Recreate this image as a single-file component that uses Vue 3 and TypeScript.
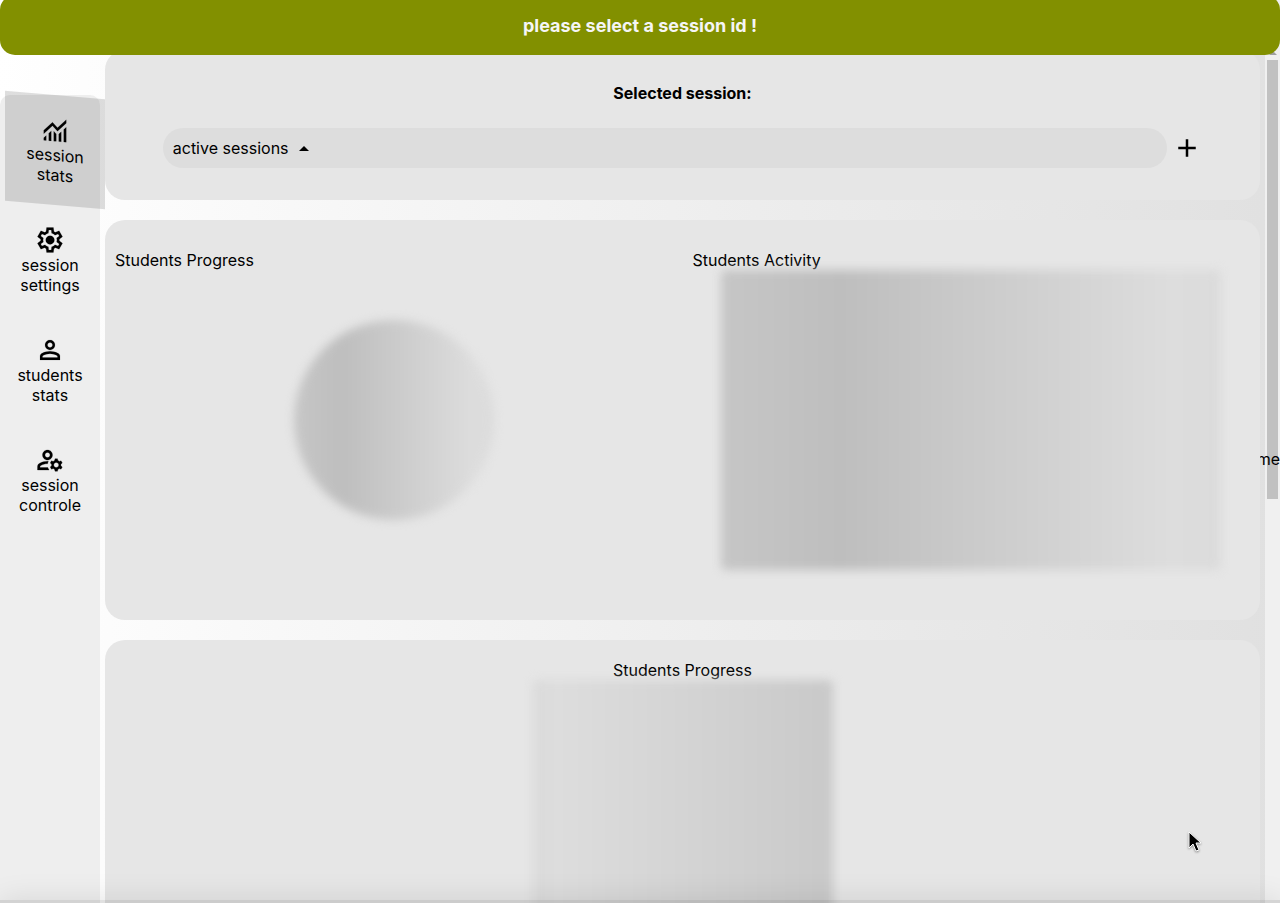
<script setup lang="ts">
import { ref } from 'vue'

interface NavItem {
  id: string
  lines: [string, string]
  viewBox: string
  stroke: number
  path: string
}

const symbolBox = '0 -960 960 960'

const navItems: NavItem[] = [
  {
    id: 'session-stats',
    lines: ['session', 'stats'],
    viewBox: symbolBox,
    stroke: 4,
    path: 'M120-120v-80l80-80v160h-80Zm160 0v-240l80-80v320h-80Zm160 0v-320l80 81v239h-80Zm160 0v-239l80-80v319h-80Zm160 0v-400l80-80v480h-80ZM120-327v-113l280-280 160 160 280-280v113L560-447 400-607 120-327Z',
  },
  {
    id: 'session-settings',
    lines: ['session', 'settings'],
    viewBox: symbolBox,
    stroke: 4,
    path: 'm370-80-16-128q-13-5-24.5-12T307-235l-119 50L78-375l103-78q-1-7-1-13.5v-27q0-6.5 1-13.5L78-585l110-190 119 50q11-8 23-15t24-12l16-128h220l16 128q13 5 24.5 12t22.5 15l119-50 110 190-103 78q1 7 1 13.5v27q0 6.5-2 13.5l103 78-110 190-118-50q-11 8-23 15t-24 12L590-80H370Zm70-80h79l14-106q31-8 57.5-23.5T639-327l99 41 39-68-86-65q5-14 7-29.5t2-31.5q0-16-2-31.5t-7-29.5l86-65-39-68-99 42q-22-23-48.5-38.5T533-694l-13-106h-79l-14 106q-31 8-57.5 23.5T321-633l-99-41-39 68 86 64q-5 15-7 30t-2 32q0 16 2 31t7 30l-86 65 39 68 99-42q22 23 48.5 38.5T427-266l13 106Zm42-180q58 0 99-41t41-99q0-58-41-99t-99-41q-59 0-99.5 41T342-480q0 58 40.5 99t99.5 41Z',
  },
  {
    id: 'students-stats',
    lines: ['students', 'stats'],
    viewBox: symbolBox,
    stroke: 4,
    path: 'M480-480q-66 0-113-47t-47-113q0-66 47-113t113-47q66 0 113 47t47 113q0 66-47 113t-113 47ZM160-160v-112q0-34 17.5-62.5T224-378q62-31 126-46.5T480-440q66 0 130 15.5T736-378q29 15 46.5 43.5T800-272v112H160Zm80-80h480v-32q0-11-5.5-20T700-306q-54-27-109-40.5T480-360q-56 0-111 13.5T260-306q-9 5-14.5 14t-5.5 20v32Zm240-320q33 0 56.5-23.5T560-640q0-33-23.5-56.5T480-720q-33 0-56.5 23.5T400-640q0 33 23.5 56.5T480-560Z',
  },
  {
    id: 'session-controle',
    lines: ['session', 'controle'],
    viewBox: '0 0 24 24',
    stroke: 0.2,
    path: 'M4 18v-.65c0-.34.16-.66.41-.81C6.1 15.53 8.03 15 10 15c.03 0 .05 0 .08.01.1-.7.3-1.37.59-1.98-.22-.02-.44-.03-.67-.03-2.42 0-4.68.67-6.61 1.82-.88.52-1.39 1.5-1.39 2.53V20h9.26c-.42-.6-.75-1.28-.97-2H4zM10 12c2.21 0 4-1.79 4-4s-1.79-4-4-4-4 1.79-4 4 1.79 4 4 4zm0-6c1.1 0 2 .9 2 2s-.9 2-2 2-2-.9-2-2 .9-2 2-2zM20.75 16c0-.22-.03-.42-.06-.63l1.14-1.01-1-1.73-1.45.49c-.32-.27-.68-.48-1.08-.63L18 11h-2l-.3 1.49c-.4.15-.76.36-1.08.63l-1.45-.49-1 1.73 1.14 1.01c-.03.21-.06.41-.06.63s.03.42.06.63l-1.14 1.01 1 1.73 1.45-.49c.32.27.68.48 1.08.63L16 21h2l.3-1.49c.4-.15.76-.36 1.08-.63l1.45.49 1-1.73-1.14-1.01c.03-.21.06-.41.06-.63zM17 18c-1.1 0-2-.9-2-2s.9-2 2-2 2 .9 2 2-.9 2-2 2z',
  },
]

const activeNav = ref('session-stats')
const session = ref('')
</script>

<template>
  <div class="app">
    <div class="banner" role="alert">please select a session id !</div>

    <nav class="sidebar">
      <button
        v-for="item in navItems"
        :key="item.id"
        type="button"
        class="nav-item"
        :class="{ active: item.id === activeNav }"
        @click="activeNav = item.id"
      >
        <svg class="icon" :viewBox="item.viewBox" aria-hidden="true">
          <path :d="item.path" stroke="currentColor" :stroke-width="item.stroke" />
        </svg>
        <span>{{ item.lines[0] }}</span>
        <span>{{ item.lines[1] }}</span>
      </button>
    </nav>

    <main class="content">
      <section class="panel session-panel">
        <label class="session-title" for="session">Selected session:</label>
        <div class="session-row">
          <div class="select-box">
            <select id="session" v-model="session">
              <option value="">active sessions</option>
            </select>
            <svg class="caret" viewBox="0 0 10 5" aria-hidden="true"><path d="M0 5 5 0l5 5z" /></svg>
          </div>
          <button type="button" class="add" aria-label="Add session">
            <svg class="icon" viewBox="0 0 24 24" aria-hidden="true"><path d="M19 13h-6v6h-2v-6H5v-2h6V5h2v6h6z" /></svg>
          </button>
        </div>
      </section>

      <section class="panel charts-panel">
        <div class="chart-column">
          <h2>Students Progress</h2>
          <div class="chart-area"><div class="skeleton circle"></div></div>
        </div>
        <div class="chart-column">
          <h2>Students Activity</h2>
          <div class="chart-area"><div class="skeleton wide"></div></div>
        </div>
      </section>

      <section class="panel progress-panel">
        <h2>Students Progress</h2>
        <div class="skeleton tall"></div>
      </section>
    </main>

    <div class="scroll-track" aria-hidden="true">
      <svg class="scroll-arrow" viewBox="0 0 8 4"><path d="M0 4 4 0l4 4z" /></svg>
      <div class="scroll-thumb"></div>
    </div>

    <div class="side-label"><span>me</span></div>
    <div class="bottom-bar"></div>

    <svg class="pointer" viewBox="0 0 16 22" aria-hidden="true">
      <path d="M1 1v16l4-4 3 7 3-1-3-7h5z" />
    </svg>
  </div>
</template>

<style>
body {
  margin: 0;
}
</style>

<style scoped>
.app {
  position: relative;
  display: flex;
  height: 100vh;
  overflow: hidden;
  box-sizing: border-box;
  background: linear-gradient(92deg, #ffffff, #fcfcfc 10%, #e0e0e0);
  color: #000;
  font: 16px/20px Inter, "Liberation Sans", sans-serif;
}

button,
select {
  margin: 0;
  padding: 0;
  border: 0;
  background: none;
  color: inherit;
  font: inherit;
}

h2 {
  margin: 0;
  font: inherit;
}

.banner {
  position: absolute;
  z-index: 4;
  top: -5px;
  left: 0;
  right: 0;
  display: flex;
  align-items: center;
  justify-content: center;
  box-sizing: border-box;
  height: 60px;
  padding-top: 2px;
  border-radius: 15px;
  background: #829000;
  color: #f5f5f5;
  font-size: 18px;
  font-weight: 700;
}

.sidebar {
  z-index: 1;
  flex: 0 0 100px;
  margin-top: 95px;
  border-radius: 10px 10px 0 0;
  background: #eeeeee;
}

.nav-item {
  display: flex;
  flex-direction: column;
  align-items: center;
  width: 100%;
  padding: 20px 0;
}

.nav-item.active {
  background: rgba(0, 0, 0, 0.13);
  transform: translateX(5px) skewY(5deg);
}

.icon {
  display: block;
  width: 30px;
  height: 30px;
}

.content {
  flex: 1;
  display: flex;
  flex-direction: column;
  gap: 20px;
  min-width: 0;
  margin-top: 50px;
  padding: 0 5px;
}

.panel {
  flex: none;
  border-radius: 20px;
  background: #e6e6e6;
}

.session-panel {
  display: flex;
  flex-direction: column;
  align-items: center;
  gap: 25px;
  padding: 33px 0 32px;
}

.session-title {
  font-weight: 700;
}

.session-row {
  display: flex;
  align-items: center;
  gap: 5px;
  width: 90%;
}

.select-box {
  flex: 1;
  display: flex;
  align-items: center;
  gap: 10px;
  height: 40px;
  padding: 0 10px;
  border-radius: 20px;
  background: #dddddd;
}

.select-box select {
  appearance: none;
  outline: none;
}

.caret {
  width: 10px;
  height: 5px;
}

.charts-panel {
  display: flex;
  padding: 30px 0 50px;
}

.chart-column {
  flex: 1;
}

.chart-column h2 {
  padding-left: 10px;
}

.chart-area {
  display: flex;
  align-items: center;
  justify-content: center;
  height: 300px;
}

.skeleton {
  border-radius: 5px;
  background: linear-gradient(90deg, #c6c6c6, #bebebe 24%, #dddddd 90%, #dbdbdb);
  filter: blur(5px);
}

.circle {
  width: 200px;
  height: 200px;
  border-radius: 50%;
}

.wide {
  width: 500px;
  height: 300px;
}

.progress-panel {
  display: flex;
  flex-direction: column;
  align-items: center;
  padding: 20px 0;
}

.tall {
  width: 300px;
  height: 400px;
  background: linear-gradient(90deg, #dadada, #dddddd 8%, #c9c9c9);
}

.scroll-track {
  flex: 0 0 15px;
  display: flex;
  flex-direction: column;
  align-items: center;
  gap: 5px;
  box-sizing: border-box;
  padding-top: 51px;
  background: #f0f0f0;
}

.scroll-arrow {
  width: 8px;
  height: 4px;
  fill: #a0a0a0;
}

.scroll-thumb {
  width: 11px;
  height: 439px;
  background: #c1c1c1;
}

.side-label {
  position: absolute;
  z-index: 2;
  top: 0;
  bottom: 0;
  right: 0;
  display: flex;
  align-items: center;
  justify-content: flex-end;
  width: 20px;
  padding-top: 14px;
  overflow: hidden;
}

.bottom-bar {
  position: absolute;
  z-index: 3;
  left: 0;
  right: 0;
  bottom: -57px;
  height: 60px;
  background: rgba(0, 0, 0, 0.11);
  box-shadow: 0 0 30px rgba(0, 0, 0, 0.1);
}

.pointer {
  position: absolute;
  z-index: 5;
  right: 76px;
  bottom: 50px;
  width: 16px;
  height: 22px;
  fill: #000;
  stroke: #fff;
  stroke-width: 1;
  filter: drop-shadow(0 1px 1px rgba(0, 0, 0, 0.4));
}
</style>
